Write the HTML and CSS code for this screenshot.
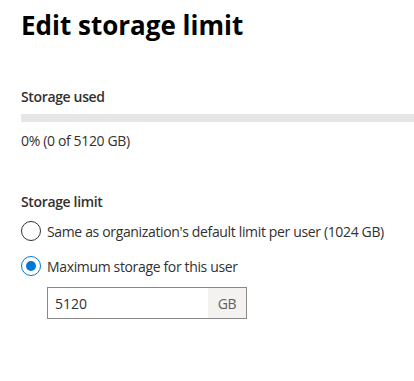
FILE: index.html
```html
<!DOCTYPE html>
<html lang="en">
<head>
  <meta charset="UTF-8" />
  <title>Edit storage limit</title>
  <link rel="stylesheet" href="styles.css">
</head>
<body>
  <div class="panel">
    <h1 class="title">Edit storage limit</h1>

    <div class="section">
      <div class="label">Storage used</div>
      <div class="bar"><div class="bar-fill" style="width:0%"></div></div>
      <div class="usage">0% (0 of 5120 GB)</div>
    </div>

    <div class="section">
      <div class="label">Storage limit</div>
      <label class="radio">
        <input type="radio" name="limit">
        <span class="dot"></span>
        <span>Same as organization's default limit per user (1024 GB)</span>
      </label>
      <label class="radio">
        <input type="radio" name="limit" checked>
        <span class="dot"></span>
        <span>Maximum storage for this user</span>
      </label>
      <div class="field">
        <input class="field-input" value="5120">
        <span class="suffix">GB</span>
      </div>
    </div>
  </div>
</body>
</html>
```

FILE: styles.css
```css
body { margin:0; background:#fff; font-family: "Open Sans", "Noto Sans", Arial, sans-serif; color:#323130; font-size:14px; letter-spacing:-0.35px; }
.panel { padding:9px 0 0 21px; overflow:hidden; }
.title { margin:0; font-size:26px; font-weight:700; color:#000; line-height:32px; letter-spacing:0; }
.section { margin-top:46px; }
.section + .section { margin-top:41px; }
.label { font-weight:600; line-height:20px; color:#323130; }
.bar { height:8px; background:#e6e6e6; margin-top:7px; margin-right:-21px; }
.bar-fill { height:100%; background:#0078d4; }
.usage { margin-top:9px; line-height:20px; }
.radio { display:flex; align-items:center; gap:6px; height:20px; margin-top:15px; cursor:pointer; }
.section .label + .radio { margin-top:9px; }
.radio input { display:none; }
.dot { width:18px; height:18px; border:1px solid #323130; border-radius:50%; box-sizing:content-box; position:relative; flex:none; }
.radio input:checked + .dot { border-color:#0078d4; }
.radio input:checked + .dot::after { content:""; position:absolute; left:4px; top:4px; width:10px; height:10px; border-radius:50%; background:#0078d4; }
.field { display:flex; width:200px; height:32px; box-sizing:border-box; border:1px solid #8a8886; margin:11px 0 0 26px; }
.field-input { flex:1; min-width:0; border:none; outline:none; padding:0 7px; font:inherit; color:#323130; }
.suffix { width:38px; background:#f3f2f1; display:flex; align-items:center; justify-content:center; color:#605e5c; }
```
